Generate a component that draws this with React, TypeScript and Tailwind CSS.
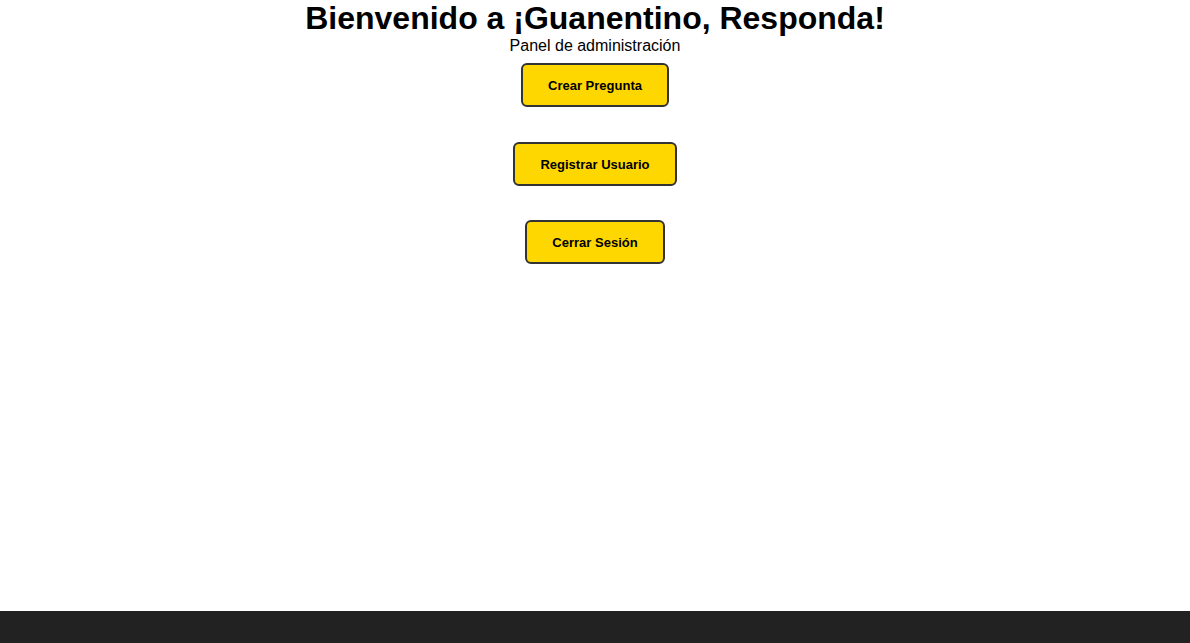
import React from "react";

const AdminButton = ({ label }: { label: string }) => (
  <button className="rounded-md border-2 border-[#333] bg-[#ffd700] px-[25px] pt-[13px] pb-[11px] text-[13px] font-bold leading-4 text-black">
    {label}
  </button>
);

const App = () => {
  return (
    <div className="flex min-h-screen flex-col bg-white font-['Liberation_Sans',Arial,sans-serif] text-black">
      <main className="flex flex-1 flex-col items-center">
        <h1 className="text-[32px] font-bold leading-[37px]">Bienvenido a ¡Guanentino, Responda!</h1>
        <p className="text-base leading-[18px]">Panel de administración</p>
        <div className="mt-[8px] flex flex-col items-center gap-[34.5px]">
          <AdminButton label="Crear Pregunta" />
          <AdminButton label="Registrar Usuario" />
          <AdminButton label="Cerrar Sesión" />
        </div>
      </main>
      <footer className="h-8 bg-[#222]" />
    </div>
  );
};

export default App;
